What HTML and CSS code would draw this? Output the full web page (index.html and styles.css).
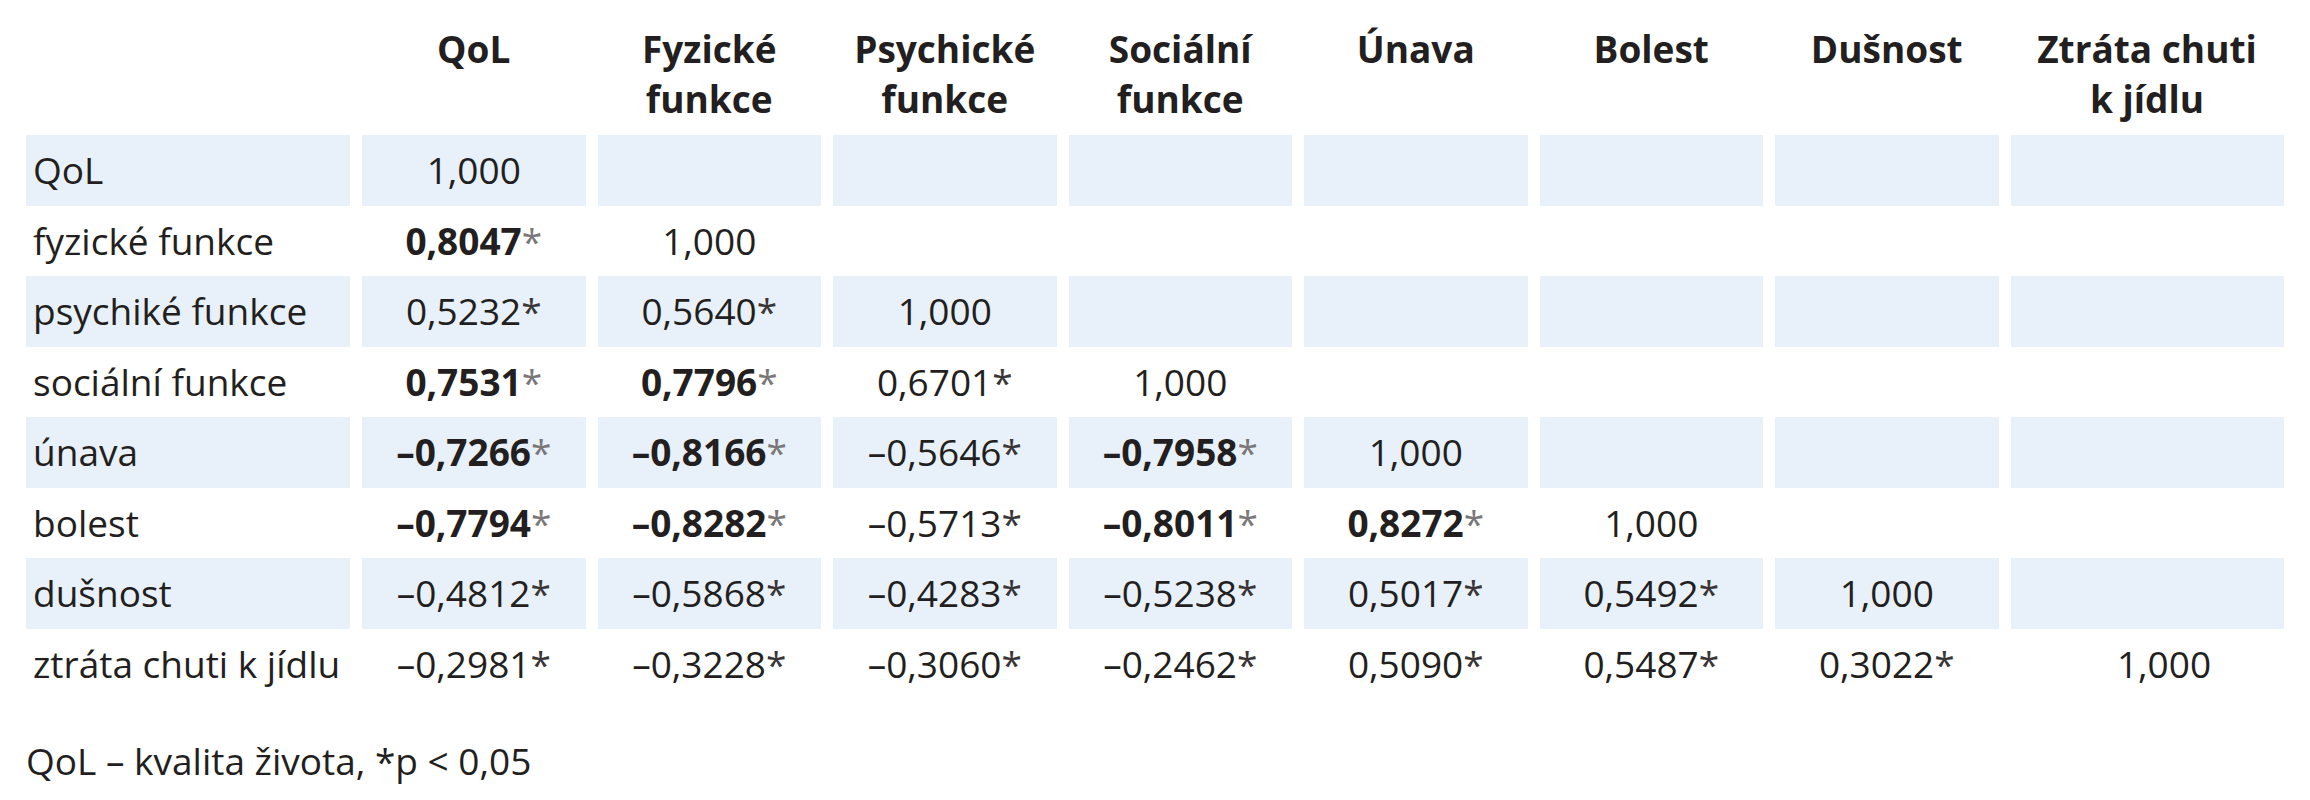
FILE: index.html
```html
<!DOCTYPE html>
<html lang="cs">
<head>
<meta charset="utf-8">
<title>Korelace QoL</title>
<link rel="stylesheet" href="styles.css">
</head>
<body>
<div class="page">
<table class="corr">
  <colgroup>
    <col class="c-label">
    <col class="c-data"><col class="c-data"><col class="c-data"><col class="c-data">
    <col class="c-data"><col class="c-data"><col class="c-data">
    <col class="c-last">
  </colgroup>
  <thead>
    <tr>
      <th></th>
      <th>QoL</th>
      <th>Fyzické<br>funkce</th>
      <th>Psychické<br>funkce</th>
      <th>Sociální<br>funkce</th>
      <th>Únava</th>
      <th>Bolest</th>
      <th>Dušnost</th>
      <th>Ztráta chuti<br>k jídlu</th>
    </tr>
  </thead>
  <tbody>
    <tr class="band">
      <td class="lbl">QoL</td>
      <td>1,000</td><td></td><td></td><td></td><td></td><td></td><td></td><td></td>
    </tr>
    <tr>
      <td class="lbl">fyzické funkce</td>
      <td><b>0,8047</b><i>*</i></td><td>1,000</td><td></td><td></td><td></td><td></td><td></td><td></td>
    </tr>
    <tr class="band">
      <td class="lbl">psychiké funkce</td>
      <td>0,5232<i>*</i></td><td>0,5640<i>*</i></td><td>1,000</td><td></td><td></td><td></td><td></td><td></td>
    </tr>
    <tr>
      <td class="lbl">sociální funkce</td>
      <td><b>0,7531</b><i>*</i></td><td><b>0,7796</b><i>*</i></td><td>0,6701<i>*</i></td><td>1,000</td><td></td><td></td><td></td><td></td>
    </tr>
    <tr class="band">
      <td class="lbl">únava</td>
      <td><b>–0,7266</b><i>*</i></td><td><b>–0,8166</b><i>*</i></td><td>–0,5646<i>*</i></td><td><b>–0,7958</b><i>*</i></td><td>1,000</td><td></td><td></td><td></td>
    </tr>
    <tr>
      <td class="lbl">bolest</td>
      <td><b>–0,7794</b><i>*</i></td><td><b>–0,8282</b><i>*</i></td><td>–0,5713<i>*</i></td><td><b>–0,8011</b><i>*</i></td><td><b>0,8272</b><i>*</i></td><td>1,000</td><td></td><td></td>
    </tr>
    <tr class="band">
      <td class="lbl">dušnost</td>
      <td>–0,4812<i>*</i></td><td>–0,5868<i>*</i></td><td>–0,4283<i>*</i></td><td>–0,5238<i>*</i></td><td>0,5017<i>*</i></td><td>0,5492<i>*</i></td><td>1,000</td><td></td>
    </tr>
    <tr>
      <td class="lbl">ztráta chuti k jídlu</td>
      <td>–0,2981<i>*</i></td><td>–0,3228<i>*</i></td><td>–0,3060<i>*</i></td><td>–0,2462<i>*</i></td><td>0,5090<i>*</i></td><td>0,5487<i>*</i></td><td>0,3022<i>*</i></td><td class="last">1,000</td>
    </tr>
  </tbody>
</table>
<p class="note">QoL – kvalita života, *p &lt; 0,05</p>
</div>
</body>
</html>
```

FILE: styles.css
```css
html, body {
  margin: 0;
  padding: 0;
  background: #ffffff;
}

body {
  font-family: "Open Sans", "Noto Sans", sans-serif;
  font-size: 37px;
  color: #231f20;
}

.page {
  padding-left: 14px;
}

.corr {
  border-collapse: separate;
  border-spacing: 12px 0;
  table-layout: fixed;
  width: 2270px;
}

.c-label { width: 324px; }
.c-data { width: 223.5px; }
.c-last { width: 273px; }

.corr th {
  font-weight: 700;
  text-align: center;
  vertical-align: top;
  line-height: 50px;
  padding: 24px 0 11px;
  white-space: nowrap;
}

.corr td {
  height: 70.5px;
  padding: 0;
  line-height: 50px;
  text-align: center;
  vertical-align: middle;
  white-space: nowrap;
}

.corr td.lbl {
  text-align: left;
  padding-left: 7px;
}

.corr td.last {
  padding-left: 34px;
}

.corr tr.band td {
  background: #e8f1fa;
}

.corr b {
  font-weight: 700;
}

.corr i {
  font-style: normal;
  color: #3a3536;
}

.corr b + i {
  color: #7a7778;
}

.note {
  margin: 37px 0 0 12px;
  line-height: 50px;
}
```
